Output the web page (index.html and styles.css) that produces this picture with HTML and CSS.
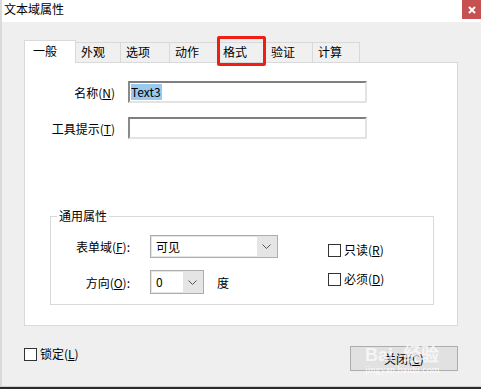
FILE: index.html
```html
<!DOCTYPE html>
<html lang="zh-CN">
<head>
    <meta charset="UTF-8">
    <meta name="viewport" content="width=device-width, initial-scale=1.0">
    <title>文本域属性</title>
    <link rel="stylesheet" href="styles.css">
</head>
<body>
    <div class="window">
        <div class="titlebar">
            <span class="title">文本域属性</span>
            <span class="close-btn">
                <svg width="8" height="8" viewBox="0 0 8 8"><path d="M1 1 L7 7 M7 1 L1 7" stroke="#fff" stroke-width="2"/></svg>
            </span>
        </div>

        <div class="content">
            <div class="tabs">
                <div class="tab active w51">一般</div>
                <div class="tab w46">外观</div>
                <div class="tab w50">选项</div>
                <div class="tab w49">动作</div>
                <div class="tab w49">格式</div>
                <div class="tab w48">验证</div>
                <div class="tab w48">计算</div>
            </div>
            <div class="mark"></div>

            <div class="panel">
                <div class="fields">
                    <label>名称(<u>N</u>)</label>
                    <div class="textbox"><span class="selected">Text3</span></div>
                    <label>工具提示(<u>T</u>)</label>
                    <div class="textbox"></div>
                </div>

                <div class="group">
                    <span class="legend">通用属性</span>
                    <div class="group-grid">
                        <label>表单域(<u>F</u>):</label>
                        <div class="combo wide">
                            <span class="combo-value">可见</span>
                            <span class="combo-arrow"><svg width="9" height="5" viewBox="0 0 9 5"><path d="M0.5 0.5 L4.5 4.5 L8.5 0.5" fill="none" stroke="#555" stroke-width="1"/></svg></span>
                        </div>
                        <label>方向(<u>O</u>):</label>
                        <div class="angle">
                            <div class="combo narrow">
                                <span class="combo-value">0</span>
                                <span class="combo-arrow"><svg width="9" height="5" viewBox="0 0 9 5"><path d="M0.5 0.5 L4.5 4.5 L8.5 0.5" fill="none" stroke="#555" stroke-width="1"/></svg></span>
                            </div>
                            <span>度</span>
                        </div>
                    </div>
                    <div class="checks">
                        <div class="check"><span class="box"></span><span>只读(<u>R</u>)</span></div>
                        <div class="check"><span class="box"></span><span>必须(<u>D</u>)</span></div>
                    </div>
                </div>
            </div>

            <div class="footer">
                <div class="check"><span class="box"></span><span>锁定(<u>L</u>)</span></div>
                <div class="button">
                    <span>关闭(<u>C</u>)</span>
                    <div class="watermark">
                        <span class="wm-big">Bai<span class="wm-gap"></span>经验</span>
                        <span class="wm-small">jingyan.baidu.com</span>
                    </div>
                </div>
            </div>
        </div>
    </div>
</body>
</html>
```

FILE: styles.css
```css
body {
    margin: 0;
    background-color: #2b2b2b;
    font-family: "Noto Sans CJK SC", "Microsoft YaHei", sans-serif;
    font-size: 12px;
    color: #000;
}
u {
    text-decoration-thickness: 1px;
    text-underline-offset: 1px;
}
.window {
    width: 481px;
    height: 387px;
    box-sizing: border-box;
    border-left: 2px solid #d9d9d9;
    border-bottom: 1px solid #cfcfcf;
    background-color: #efefef;
}
.titlebar {
    height: 22px;
    background-color: #fff;
    display: flex;
    justify-content: space-between;
    align-items: flex-start;
}
.title {
    padding-left: 2px;
    line-height: 18px;
    font-size: 12px;
}
.close-btn {
    width: 19px;
    height: 19px;
    background-color: #c75050;
    display: flex;
    align-items: center;
    justify-content: center;
}
.content {
    position: relative;
    padding-left: 22px;
}
.tabs {
    display: flex;
    align-items: flex-end;
    height: 22px;
    margin-top: 18px;
    position: relative;
    z-index: 1;
}
.tab {
    height: 20px;
    box-sizing: border-box;
    border: 1px solid #d9d9d9;
    border-bottom: none;
    margin-left: -1px;
    padding-left: 5px;
    line-height: 18px;
    background-color: #f0f0f0;
}
.tab.active {
    height: 23px;
    margin-left: 0;
    margin-bottom: -1px;
    padding-left: 8px;
    line-height: 20px;
    background-color: #fff;
}
.w51 { width: 52px; }
.w46 { width: 46px; }
.w50 { width: 50px; }
.w49 { width: 49px; }
.w48 { width: 48px; }
.mark {
    position: absolute;
    left: 215px;
    top: -4px;
    width: 49px;
    height: 30px;
    box-sizing: border-box;
    border: 3px solid #f01e14;
    border-radius: 2px;
    z-index: 2;
}
.panel {
    width: 434px;
    height: 264px;
    box-sizing: border-box;
    border: 1px solid #d9d9d9;
    background-color: #fff;
    padding-top: 18px;
}
.fields {
    display: grid;
    grid-template-columns: 90px 239px;
    grid-auto-rows: 22px;
    column-gap: 13px;
    row-gap: 14px;
    align-items: center;
}
.fields label {
    text-align: right;
}
.textbox {
    height: 22px;
    box-sizing: border-box;
    border-style: solid;
    border-width: 2px;
    border-color: #7f7f7f #e3e3e3 #e3e3e3 #8a8a8a;
    padding-left: 1px;
    display: flex;
    align-items: center;
}
.selected {
    background-color: #99c9ef;
    line-height: 16px;
    padding-right: 1px;
}
.group {
    position: relative;
    margin: 77px 0 0 25px;
    width: 384px;
    height: 89px;
    box-sizing: border-box;
    border: 1px solid #d9d9d9;
    display: flex;
    align-items: flex-start;
}
.legend {
    position: absolute;
    left: 6px;
    top: -10px;
    padding: 0 2px;
    background-color: #fff;
    line-height: 18px;
}
.group-grid {
    display: grid;
    grid-template-columns: 79px auto;
    column-gap: 20px;
    row-gap: 12px;
    align-items: center;
    margin-top: 18px;
}
.group-grid label {
    text-align: right;
}
.combo {
    height: 23px;
    box-sizing: border-box;
    border: 1px solid #adadad;
    background-color: #e5e5e5;
    padding: 1px;
    display: flex;
}
.combo.wide { width: 128px; }
.combo.narrow { width: 54px; height: 24px; }
.combo-value {
    flex: 1;
    background-color: #fff;
    padding-left: 4px;
    line-height: 19px;
}
.combo.narrow .combo-value {
    line-height: 20px;
}
.combo-arrow {
    width: 19px;
    display: flex;
    align-items: center;
    justify-content: center;
}
.angle {
    display: flex;
    align-items: center;
    gap: 13px;
}
.checks {
    margin: 26px 0 0 50px;
    display: flex;
    flex-direction: column;
    gap: 15px;
}
.check {
    display: flex;
    align-items: center;
    gap: 3px;
    line-height: 14px;
}
.box {
    width: 13px;
    height: 13px;
    box-sizing: border-box;
    border: 1px solid #333;
    background-color: #fff;
}
.footer {
    display: flex;
    justify-content: space-between;
    align-items: flex-start;
    margin-top: 20px;
    padding-right: 23px;
}
.footer .check {
    margin-top: 1px;
}
.button {
    position: relative;
    width: 108px;
    height: 25px;
    box-sizing: border-box;
    border: 1px solid #adadad;
    background-color: #e1e1e1;
    display: flex;
    align-items: center;
    justify-content: center;
}
.watermark {
    position: absolute;
    left: 14px;
    top: -2px;
    display: flex;
    flex-direction: column;
    align-items: flex-start;
    color: rgba(255, 255, 255, 0.7);
    pointer-events: none;
}
.wm-big {
    font-family: "Liberation Sans", sans-serif;
    font-weight: bold;
    font-size: 18px;
    line-height: 20px;
    display: flex;
}
.wm-gap {
    width: 10px;
}
.wm-small {
    font-family: "Liberation Serif", serif;
    font-size: 10px;
    line-height: 10px;
    color: rgba(255, 255, 255, 0.8);
}
```
